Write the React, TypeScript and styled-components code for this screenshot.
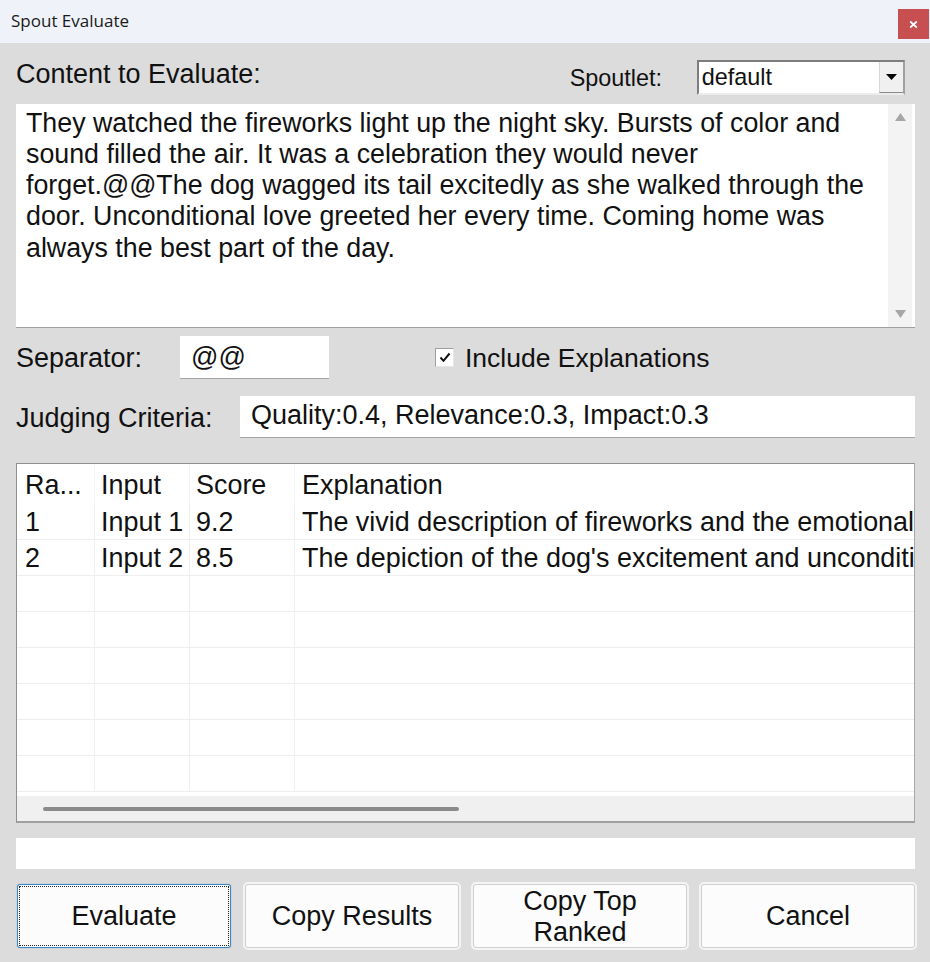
import React from "react";
import styled, { createGlobalStyle } from "styled-components";

const Global = createGlobalStyle`
  html, body { margin: 0; padding: 0; background: #dcdcdc; }
  body { font-family: "Liberation Sans", Arial, sans-serif; color: #111; }
`;

const Window = styled.div`
  width: 930px;
  height: 962px;
  display: flex;
  flex-direction: column;
  background: #dcdcdc;
  overflow: hidden;
`;

const TitleBar = styled.div`
  height: 43px;
  flex: none;
  display: flex;
  align-items: flex-start;
  justify-content: space-between;
  background: #eff3f9;
`;

const Title = styled.span`
  font-family: "Open Sans", "Noto Sans", sans-serif;
  font-size: 17px;
  line-height: 41px;
  margin-left: 11px;
  color: #1a1a1a;
`;

const CloseButton = styled.div`
  width: 31px;
  height: 30px;
  margin: 9px 1px 0 0;
  background: #c74f52;
  display: flex;
  align-items: center;
  justify-content: center;
`;

const Body = styled.div`
  flex: 1;
  display: flex;
  flex-direction: column;
  padding: 0 14px 0 16px;
`;

const TopRow = styled.div`
  height: 61px;
  flex: none;
  display: flex;
`;

const Label = styled.span<{ $w?: number; $top?: number }>`
  font-size: 27px;
  line-height: 31px;
  white-space: nowrap;
  color: #111;
  flex: none;
  width: ${(p) => (p.$w ? `${p.$w}px` : "auto")};
  margin-top: ${(p) => p.$top ?? 0}px;
`;

const SpoutletLabel = styled(Label)`
  font-size: 23.4px;
  margin-left: 309px;
  width: 127px;
`;

const Combo = styled.div`
  width: 208px;
  height: 35px;
  margin-top: 17px;
  box-sizing: border-box;
  border: 2px solid #7d7d7d;
  border-right-color: #a0a0a0;
  border-bottom-color: #ececec;
  background: #fff;
  display: flex;
  justify-content: space-between;
  font-size: 23.4px;
  line-height: 31px;
  padding-left: 3px;
  color: #111;
`;

const ComboButton = styled.div`
  width: 24px;
  height: 31px;
  box-sizing: border-box;
  background: #f0f0f0;
  border-left: 1px solid #d8d8d8;
  border-bottom: 1px solid #8a8a8a;
  display: flex;
  align-items: center;
  justify-content: center;
`;

const ContentArea = styled.div`
  height: 224px;
  flex: none;
  width: 899px;
  display: flex;
  background: #fff;
  box-sizing: border-box;
  border-bottom: 1px solid #a0a0a0;
`;

const ContentText = styled.div`
  flex: 1;
  font-size: 26.8px;
  line-height: 31.25px;
  padding: 3.5px 8px 0 10px;
  color: #111;
`;

const VScroll = styled.div`
  width: 24px;
  margin-right: 3px;
  background: #f3f3f3;
  display: flex;
  flex-direction: column;
  justify-content: space-between;
  align-items: center;
  padding: 9px 0 9px;
  box-sizing: border-box;
`;

const SeparatorRow = styled.div`
  height: 43px;
  flex: none;
  margin-top: 8px;
  display: flex;
  align-items: center;
`;

const TextInput = styled.div<{ $w: number; $h: number; $shift: number }>`
  width: ${(p) => p.$w}px;
  height: ${(p) => p.$h}px;
  box-sizing: border-box;
  flex: none;
  background: #fff;
  border-bottom: 1px solid #a5a5a5;
  font-size: 27px;
  line-height: ${(p) => p.$h + p.$shift}px;
  padding-left: 11px;
  color: #111;
`;

const RowLabel = styled(Label)`
  padding-top: 2px;
`;

const CheckWrap = styled.div`
  margin-left: 106px;
  display: flex;
  align-items: center;
  gap: 11px;
`;

const CheckLabel = styled(RowLabel)`
  font-size: 26.5px;
`;

const CheckBox = styled.div`
  width: 19px;
  height: 19px;
  box-sizing: border-box;
  background: #fff;
  border: 1px solid #a0a0a0;
  border-right-color: #e5e5e5;
  border-bottom-color: #e5e5e5;
  display: flex;
  align-items: center;
  justify-content: center;
`;

const CriteriaRow = styled.div`
  height: 42px;
  flex: none;
  margin-top: 17px;
  display: flex;
  align-items: center;
`;

const Table = styled.div`
  height: 360px;
  width: 899px;
  flex: none;
  margin-top: 25px;
  box-sizing: border-box;
  border: 1px solid #8f8f8f;
  border-right-color: #a8a8a8;
  border-bottom: 2px solid #a0a0a0;
  background: #fff;
  display: flex;
  flex-direction: column;
  overflow: hidden;
`;

const Grid = styled.div`
  flex: 1;
  overflow: hidden;
  min-height: 0;
`;

const TableRow = styled.div<{ $header?: boolean }>`
  display: grid;
  grid-template-columns: 78px 95px 105px 1fr;
  height: ${(p) => (p.$header ? 40 : 36)}px;
  box-sizing: border-box;
  border-bottom: ${(p) => (p.$header ? "0" : "1px solid #eeeeee")};
  width: 1300px;
`;

const Cell = styled.div<{ $header?: boolean }>`
  font-size: 26.93px;
  line-height: ${(p) => (p.$header ? 41 : 35)}px;
  padding: 1px 0 0 6px;
  box-sizing: border-box;
  white-space: nowrap;
  overflow: hidden;
  color: #111;
  border-right: 1px solid ${(p) => (p.$header ? "#f4f4f4" : "#eeeeee")};

  &:first-child {
    padding-left: 8px;
  }
  &:last-child {
    padding-left: 7px;
  }
`;

const HScroll = styled.div`
  height: 25px;
  flex: none;
  background: #f0f0f0;
  display: flex;
  align-items: center;
  padding-left: 26px;
`;

const HThumb = styled.div`
  width: 416px;
  height: 4px;
  border-radius: 2px;
  background: #8a8a8a;
`;

const StatusBar = styled.div`
  height: 31px;
  width: 899px;
  flex: none;
  margin-top: 15px;
  background: #fff;
`;

const Buttons = styled.div`
  display: grid;
  grid-template-columns: repeat(4, 214px);
  column-gap: 14px;
  margin: 15px 0 0 1px;
`;

const Button = styled.div<{ $focused?: boolean }>`
  height: 64px;
  box-sizing: border-box;
  background: #fcfcfc;
  border: 1px solid ${(p) => (p.$focused ? "#3d86c6" : "#d0d0d0")};
  border-radius: 3px;
  outline: 2px solid ${(p) => (p.$focused ? "transparent" : "#f4f4f4")};
  outline-offset: 0;
  box-shadow: ${(p) => (p.$focused ? "0 0 1px #3d86c6" : "none")};
  display: flex;
  align-items: center;
  justify-content: center;
  text-align: center;
  font-size: 27px;
  line-height: 31px;
  color: #111;
  position: relative;
  ${(p) =>
    p.$focused
      ? `&::after { content: ""; position: absolute; inset: 1px; border: 1px dotted #222; }`
      : ""}
`;

const TwoLines = styled.span`
  padding-top: 2px;
`;

const rows: [string, string, string, string][] = [
  ["1", "Input 1", "9.2", "The vivid description of fireworks and the emotional impact of the celebration"],
  ["2", "Input 2", "8.5", "The depiction of the dog's excitement and unconditional love is heartwarming"],
  ["", "", "", ""],
  ["", "", "", ""],
  ["", "", "", ""],
  ["", "", "", ""],
  ["", "", "", ""],
  ["", "", "", ""],
];

export default function App() {
  return (
    <Window>
      <Global />
      <TitleBar>
        <Title>Spout Evaluate</Title>
        <CloseButton>
          <svg width="9" height="9" viewBox="0 0 9 9">
            <path d="M1.2 1.5L7.8 7.5M7.8 1.5L1.2 7.5" stroke="#fff" strokeWidth="1.7" />
          </svg>
        </CloseButton>
      </TitleBar>
      <Body>
        <TopRow>
          <Label $top={16}>Content to Evaluate:</Label>
          <SpoutletLabel $top={20}>Spoutlet:</SpoutletLabel>
          <Combo>
            default
            <ComboButton>
              <svg width="11" height="6" viewBox="0 0 11 6">
                <path d="M0 0H11L5.5 6Z" fill="#000" />
              </svg>
            </ComboButton>
          </Combo>
        </TopRow>
        <ContentArea>
          <ContentText>
            They watched the fireworks light up the night sky. Bursts of color and sound filled the air. It was a
            celebration they would never forget.@@The dog wagged its tail excitedly as she walked through the door.
            Unconditional love greeted her every time. Coming home was always the best part of the day.
          </ContentText>
          <VScroll>
            <svg width="11" height="8" viewBox="0 0 11 8">
              <path d="M5.5 0L11 8H0Z" fill="#a6a6a6" />
            </svg>
            <svg width="11" height="8" viewBox="0 0 11 8">
              <path d="M0 0H11L5.5 8Z" fill="#a6a6a6" />
            </svg>
          </VScroll>
        </ContentArea>
        <SeparatorRow>
          <RowLabel $w={164}>Separator:</RowLabel>
          <TextInput $w={149} $h={43} $shift={0}>@@</TextInput>
          <CheckWrap>
            <CheckBox>
              <svg width="12" height="11" viewBox="0 0 12 11">
                <path d="M1.5 5.5L4.5 8.8L10.5 1.5" fill="none" stroke="#111" strokeWidth="2" />
              </svg>
            </CheckBox>
            <CheckLabel>Include Explanations</CheckLabel>
          </CheckWrap>
        </SeparatorRow>
        <CriteriaRow>
          <RowLabel $w={224}>Judging Criteria:</RowLabel>
          <TextInput $w={675} $h={42} $shift={-4}>Quality:0.4, Relevance:0.3, Impact:0.3</TextInput>
        </CriteriaRow>
        <Table>
          <Grid>
            <TableRow $header>
              <Cell $header>Ra...</Cell>
              <Cell $header>Input</Cell>
              <Cell $header>Score</Cell>
              <Cell $header>Explanation</Cell>
            </TableRow>
            {rows.map((r, i) => (
              <TableRow key={i}>
                {r.map((c, j) => (
                  <Cell key={j}>{c}</Cell>
                ))}
              </TableRow>
            ))}
          </Grid>
          <HScroll>
            <HThumb />
          </HScroll>
        </Table>
        <StatusBar />
        <Buttons>
          <Button $focused>Evaluate</Button>
          <Button>Copy Results</Button>
          <Button>
            <TwoLines>
              Copy Top
              <br />
              Ranked
            </TwoLines>
          </Button>
          <Button>Cancel</Button>
        </Buttons>
      </Body>
    </Window>
  );
}
